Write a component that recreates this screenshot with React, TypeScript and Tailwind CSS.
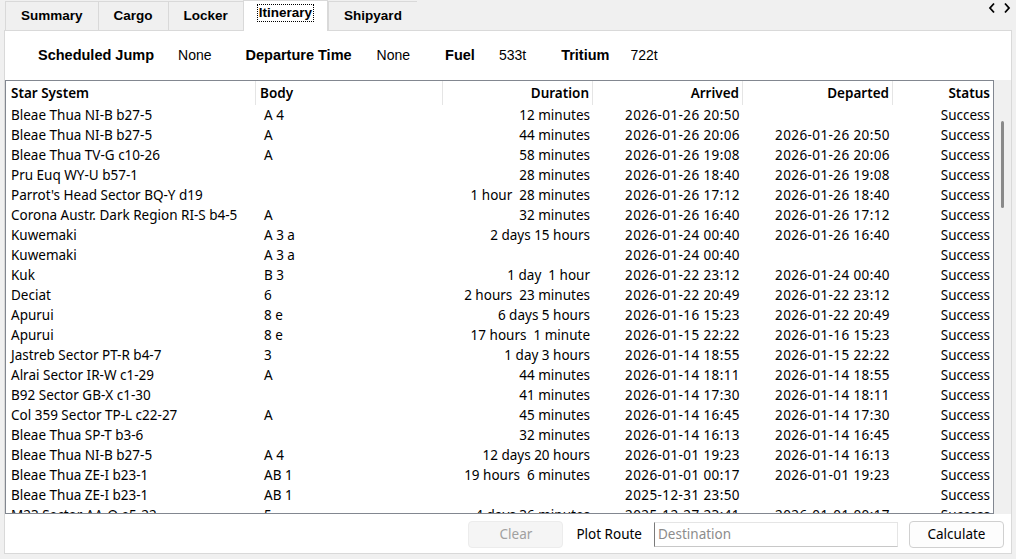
const tabs = ["Summary", "Cargo", "Locker", "Itinerary", "Shipyard"];

const info: [string, string][] = [
  ["Scheduled Jump", "None"],
  ["Departure Time", "None"],
  ["Fuel", "533t"],
  ["Tritium", "722t"],
];

type Row = [string, string, string, string, string, string];

const rows: Row[] = [
  ["Bleae Thua NI-B b27-5", "A 4", "12 minutes", "2026-01-26 20:50", "", "Success"],
  ["Bleae Thua NI-B b27-5", "A", "44 minutes", "2026-01-26 20:06", "2026-01-26 20:50", "Success"],
  ["Bleae Thua TV-G c10-26", "A", "58 minutes", "2026-01-26 19:08", "2026-01-26 20:06", "Success"],
  ["Pru Euq WY-U b57-1", "", "28 minutes", "2026-01-26 18:40", "2026-01-26 19:08", "Success"],
  ["Parrot's Head Sector BQ-Y d19", "", "1 hour  28 minutes", "2026-01-26 17:12", "2026-01-26 18:40", "Success"],
  ["Corona Austr. Dark Region RI-S b4-5", "A", "32 minutes", "2026-01-26 16:40", "2026-01-26 17:12", "Success"],
  ["Kuwemaki", "A 3 a", "2 days 15 hours", "2026-01-24 00:40", "2026-01-26 16:40", "Success"],
  ["Kuwemaki", "A 3 a", "", "2026-01-24 00:40", "", "Success"],
  ["Kuk", "B 3", "1 day  1 hour", "2026-01-22 23:12", "2026-01-24 00:40", "Success"],
  ["Deciat", "6", "2 hours  23 minutes", "2026-01-22 20:49", "2026-01-22 23:12", "Success"],
  ["Apurui", "8 e", "6 days 5 hours", "2026-01-16 15:23", "2026-01-22 20:49", "Success"],
  ["Apurui", "8 e", "17 hours  1 minute", "2026-01-15 22:22", "2026-01-16 15:23", "Success"],
  ["Jastreb Sector PT-R b4-7", "3", "1 day 3 hours", "2026-01-14 18:55", "2026-01-15 22:22", "Success"],
  ["Alrai Sector IR-W c1-29", "A", "44 minutes", "2026-01-14 18:11", "2026-01-14 18:55", "Success"],
  ["B92 Sector GB-X c1-30", "", "41 minutes", "2026-01-14 17:30", "2026-01-14 18:11", "Success"],
  ["Col 359 Sector TP-L c22-27", "A", "45 minutes", "2026-01-14 16:45", "2026-01-14 17:30", "Success"],
  ["Bleae Thua SP-T b3-6", "", "32 minutes", "2026-01-14 16:13", "2026-01-14 16:45", "Success"],
  ["Bleae Thua NI-B b27-5", "A 4", "12 days 20 hours", "2026-01-01 19:23", "2026-01-14 16:13", "Success"],
  ["Bleae Thua ZE-I b23-1", "AB 1", "19 hours  6 minutes", "2026-01-01 00:17", "2026-01-01 19:23", "Success"],
  ["Bleae Thua ZE-I b23-1", "AB 1", "", "2025-12-31 23:50", "", "Success"],
  ["M23 Sector AA-Q e5-22", "5", "4 days 36 minutes", "2025-12-27 23:41", "2026-01-01 00:17", "Success"],
];

const cols = "grid grid-cols-[250px_187px_150px_150px_150px_100px]";
const ui = "font-['Noto_Sans',sans-serif] text-[13.5px]";

const Chevron = ({ dir }: { dir: "l" | "r" }) => (
  <svg width="8" height="12" viewBox="0 0 8 12">
    <path
      d={dir === "l" ? "M6 1.5 L2 6 L6 10.5" : "M2 1.5 L6 6 L2 10.5"}
      fill="none"
      stroke="#000"
      strokeWidth="1.8"
    />
  </svg>
);

export default function App() {
  return (
    <div className="w-[1016px] h-[559px] bg-[#f0f0f0] overflow-hidden flex flex-col text-black">
      {/* tab strip */}
      <div className="h-[30px] flex items-end pl-[5px] relative">
        {tabs.map((t) => {
          const sel = t === "Itinerary";
          return (
            <div
              key={t}
              className={
                sel
                  ? "h-[31px] -mb-px z-10 bg-white border-x border-t border-[#d9d9d9] px-[14px] flex items-start pt-[4px]"
                  : "h-[29px] border-l border-t border-[#d9d9d9] last:border-r px-[15px] flex items-start pt-[6px]"
              }
            >
              <span
                className={
                  "font-['Liberation_Sans',Arial,sans-serif] font-bold text-[13.5px] leading-[16px] " +
                  (sel ? "outline-1 outline-dotted outline-black px-[1px]" : "")
                }
              >
                {t}
              </span>
            </div>
          );
        })}
        <div className="absolute right-[5px] top-[2px] flex gap-[7px]">
          <Chevron dir="l" />
          <Chevron dir="r" />
        </div>
      </div>

      {/* panel */}
      <div className="ml-[4px] w-[1008px] h-[524px] bg-white border border-[#d9d9d9] flex flex-col">
        <div className="h-[49px] flex items-center pl-[33px] font-['Liberation_Sans',Arial,sans-serif]">
          {info.map(([k, v], i) => (
            <div key={k} className="flex items-center">
              <span className="font-bold text-[14.5px]">{k}</span>
              <span
                className={
                  "text-[14px] " +
                  ["ml-[24px] mr-[34px]", "ml-[25px] mr-[35px]", "ml-[24px] mr-[35px]", "ml-[21px]"][i]
                }
              >
                {v}
              </span>
            </div>
          ))}
        </div>

        {/* table + scrollbar */}
        <div className="flex h-[434px]">
          <div className={"w-[989px] h-full border border-[#828790] overflow-hidden " + ui}>
            <div className={cols + " h-[24px] font-semibold"}>
              <div className="pl-[5px] leading-[24px] border-r border-[#e5e5e5]">Star System</div>
              <div className="pl-[4px] leading-[24px] border-r border-[#e5e5e5]">Body</div>
              <div className="pr-[3px] text-right leading-[24px] border-r border-[#e5e5e5]">Duration</div>
              <div className="pr-[3px] text-right leading-[24px] border-r border-[#e5e5e5]">Arrived</div>
              <div className="pr-[3px] text-right leading-[24px] border-r border-[#e5e5e5]">Departed</div>
              <div className="pr-[3px] text-right leading-[24px]">Status</div>
            </div>
            {rows.map((r, i) => (
              <div key={i} className={cols + " h-[20px] leading-[20px] whitespace-pre"}>
                <div className="pl-[5px] overflow-hidden">{r[0]}</div>
                <div className="pl-[8px]">{r[1]}</div>
                <div className="pr-[3px] text-right">{r[2]}</div>
                <div className="pr-[3px] text-right tracking-[0.4px]">{r[3]}</div>
                <div className="pr-[3px] text-right tracking-[0.4px]">{r[4]}</div>
                <div className="pr-[3px] text-right">{r[5]}</div>
              </div>
            ))}
          </div>
          <div className="w-[17px] h-full bg-[#f0f0f0] relative">
            <div className="absolute left-[7px] top-[41px] w-[3px] h-[87px] rounded-full bg-[#8a8a8a]" />
          </div>
        </div>

        {/* bottom controls */}
        <div className={"flex items-center justify-end pr-[7px] mt-[7px] h-[27px] " + ui}>
          <button className="w-[95px] h-[27px] rounded-[4px] bg-[#f5f5f5] border border-[#ececec] text-[#a0a0a0]">
            Clear
          </button>
          <span className="ml-[13px]">Plot Route</span>
          <div className="ml-[12px] w-[244px] h-[25px] bg-white border border-[#e5e5e5] border-l-[#7a7a7a] border-b-[#c8c8c8] flex items-center pl-[3px] text-[#8c8c8c]">
            Destination
          </div>
          <button className="ml-[11px] w-[95px] h-[27px] rounded-[4px] bg-[#fdfdfd] border border-[#d0d0d0]">
            Calculate
          </button>
        </div>
      </div>
    </div>
  );
}
